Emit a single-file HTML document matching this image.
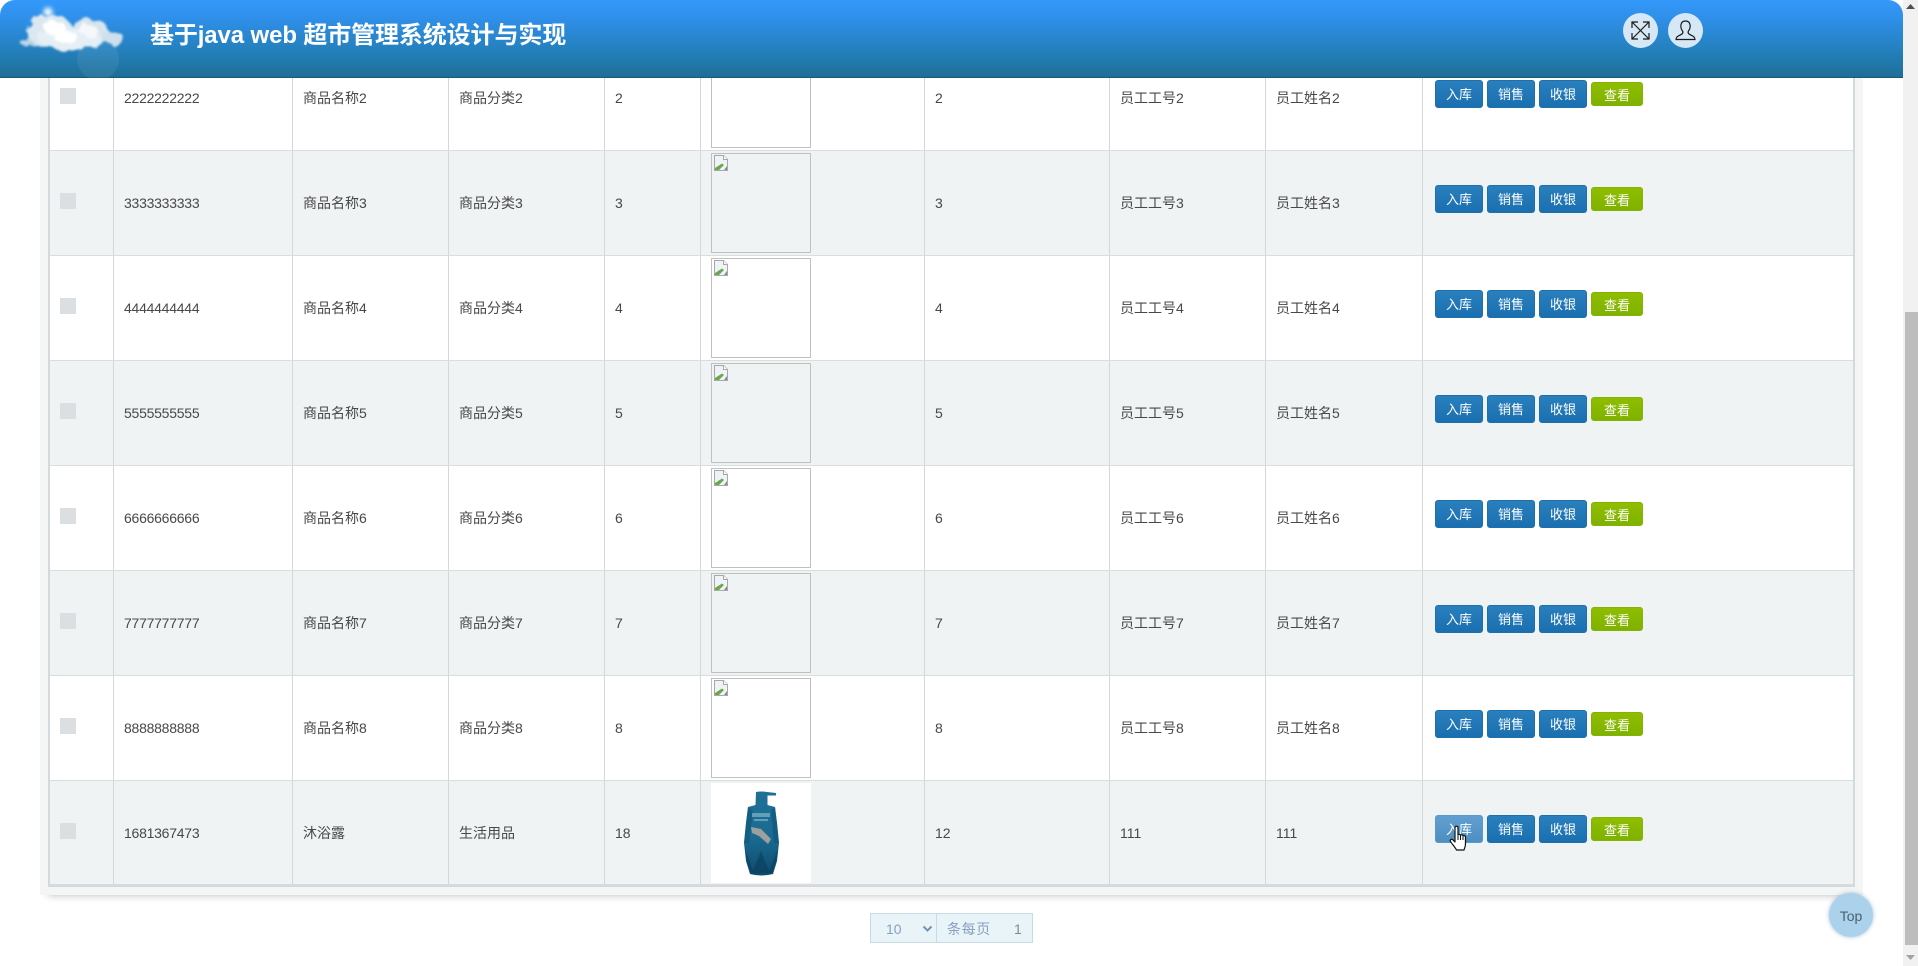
<!DOCTYPE html>
<html lang="zh"><head><meta charset="utf-8"><title>超市管理系统</title>
<style>
*{box-sizing:border-box}
html,body{margin:0;padding:0;width:1918px;height:966px;overflow:hidden;background:#fff;font-family:"Liberation Sans","Noto Sans CJK SC",sans-serif}
.panel{position:absolute;left:40px;top:-100px;width:1823px;height:995px;background:#f4f5f5;box-shadow:0 8px 8px -8px rgba(0,0,0,.28)}
.tbl{position:absolute;left:48px;top:46px;width:1807px;height:841px;border-left:2px solid #d3d9dc;border-right:2px solid #d3d9dc;border-bottom:2px solid #d3d9dc}
.r{display:flex;height:105px;background:#fff;border-bottom:1px solid #d8dddd;font-size:14px;line-height:104px;color:#484848}
.r:nth-child(even){background:#f0f3f3}
.r:last-child{height:104px}
.r>div{position:relative;flex:none;border-right:1px solid #d3d8d9;padding-left:10px;white-space:nowrap}
.r>div:nth-child(1){width:64px}
.r>div:nth-child(2){width:179px;letter-spacing:-.25px}
.r>div:nth-child(3){width:156px}
.r>div:nth-child(4){width:156px}
.r>div:nth-child(5){width:96px}
.r>div:nth-child(6){width:224px}
.r>div:nth-child(7){width:185px}
.r>div:nth-child(8){width:156px}
.r>div:nth-child(9){width:157px}
.r>div:nth-child(10){width:430px;border-right:0}
.cb{position:absolute;left:10px;top:42px;width:16px;height:16px;background:#dcdfe2}
.bi{position:absolute;left:10px;top:2px;width:100px;height:100px;border:1px solid #c0c0c0}
.bi svg{position:absolute;left:1px;top:1px}
.im{position:absolute;left:10px;top:2px;width:100px;height:100px;background:#fff}
.b{position:absolute;top:34px;width:48px;height:28px;border-radius:3px;background:linear-gradient(#2a7fbd,#1a6fb0);border:1px solid #1e70ad;color:#fff;font-size:13px;line-height:28px;text-align:center}
.b.a{left:12px}.b.s{left:64px}.b.c{left:116px}
.b.v{left:168px;top:36px;width:52px;height:24px;background:linear-gradient(#8fbd00,#7fb200);border-color:#85b400;line-height:25px}
.b.h{background:linear-gradient(#629fd0,#4d8fc1);border-color:#5a99c9}
.hd{position:absolute;left:0;top:0;width:1903px;height:78px;border-radius:15px 15px 0 0;background:linear-gradient(#3399fb 0,#2f8fe8 25%,#2480bd 65%,#1d6f96 100%);border-bottom:1px solid #175a78}
.tt{position:absolute;left:150px;top:19px;color:#fff;font-size:24px;line-height:34px;font-weight:bold;letter-spacing:-.12px;white-space:nowrap}
.ic{position:absolute;top:13px;width:35px;height:35px;border-radius:50%;background:#d6e8f5}
.pg{position:absolute;left:870px;top:913px;width:163px;height:30px;background:#e9f4f9;border:1px solid #c7dbe6;font-size:14px;line-height:30px;color:#85a2bd}
.pg span{position:absolute;top:0;white-space:nowrap}
.top{position:absolute;left:1829px;top:893px;width:44px;height:44px;border-radius:50%;background:#abd2ea;box-shadow:0 0 4px rgba(90,140,180,.55);color:#4b6172;font-size:14px;line-height:46px;text-align:center}
.sb{position:absolute;left:1903px;top:0;width:15px;height:966px;background:#f1f1f1}
.th{position:absolute;left:2px;top:312px;width:13px;height:633px;background:#bdbdbd}
svg{display:block}
</style></head><body>
<div class="panel"></div>
<div class="tbl">
<div class="r"><div><i class="cb"></i></div><div>2222222222</div><div>商品名称2</div><div>商品分类2</div><div>2</div><div><span class="bi"><svg width="16" height="16" viewBox="0 0 16 16"><path d="M1.500.5H10.500L14.500 4.500V15.500H1.500Z" fill="#eef3f8" stroke="#a8a8a8"/><path d="M2 15V13L9 8.500 11 10 6 15Z" fill="#6aa84a"/><path d="M11 15 14 11V15Z" fill="#8a8a8a"/><path d="M10.500.5V4.500H14.500" fill="#fff" stroke="#a8a8a8"/></svg></span></div><div>2</div><div>员工工号2</div><div>员工姓名2</div><div><span class="b a">入库</span><span class="b s">销售</span><span class="b c">收银</span><span class="b v">查看</span></div></div>
<div class="r"><div><i class="cb"></i></div><div>3333333333</div><div>商品名称3</div><div>商品分类3</div><div>3</div><div><span class="bi"><svg width="16" height="16" viewBox="0 0 16 16"><path d="M1.500.5H10.500L14.500 4.500V15.500H1.500Z" fill="#eef3f8" stroke="#a8a8a8"/><path d="M2 15V13L9 8.500 11 10 6 15Z" fill="#6aa84a"/><path d="M11 15 14 11V15Z" fill="#8a8a8a"/><path d="M10.500.5V4.500H14.500" fill="#fff" stroke="#a8a8a8"/></svg></span></div><div>3</div><div>员工工号3</div><div>员工姓名3</div><div><span class="b a">入库</span><span class="b s">销售</span><span class="b c">收银</span><span class="b v">查看</span></div></div>
<div class="r"><div><i class="cb"></i></div><div>4444444444</div><div>商品名称4</div><div>商品分类4</div><div>4</div><div><span class="bi"><svg width="16" height="16" viewBox="0 0 16 16"><path d="M1.500.5H10.500L14.500 4.500V15.500H1.500Z" fill="#eef3f8" stroke="#a8a8a8"/><path d="M2 15V13L9 8.500 11 10 6 15Z" fill="#6aa84a"/><path d="M11 15 14 11V15Z" fill="#8a8a8a"/><path d="M10.500.5V4.500H14.500" fill="#fff" stroke="#a8a8a8"/></svg></span></div><div>4</div><div>员工工号4</div><div>员工姓名4</div><div><span class="b a">入库</span><span class="b s">销售</span><span class="b c">收银</span><span class="b v">查看</span></div></div>
<div class="r"><div><i class="cb"></i></div><div>5555555555</div><div>商品名称5</div><div>商品分类5</div><div>5</div><div><span class="bi"><svg width="16" height="16" viewBox="0 0 16 16"><path d="M1.500.5H10.500L14.500 4.500V15.500H1.500Z" fill="#eef3f8" stroke="#a8a8a8"/><path d="M2 15V13L9 8.500 11 10 6 15Z" fill="#6aa84a"/><path d="M11 15 14 11V15Z" fill="#8a8a8a"/><path d="M10.500.5V4.500H14.500" fill="#fff" stroke="#a8a8a8"/></svg></span></div><div>5</div><div>员工工号5</div><div>员工姓名5</div><div><span class="b a">入库</span><span class="b s">销售</span><span class="b c">收银</span><span class="b v">查看</span></div></div>
<div class="r"><div><i class="cb"></i></div><div>6666666666</div><div>商品名称6</div><div>商品分类6</div><div>6</div><div><span class="bi"><svg width="16" height="16" viewBox="0 0 16 16"><path d="M1.500.5H10.500L14.500 4.500V15.500H1.500Z" fill="#eef3f8" stroke="#a8a8a8"/><path d="M2 15V13L9 8.500 11 10 6 15Z" fill="#6aa84a"/><path d="M11 15 14 11V15Z" fill="#8a8a8a"/><path d="M10.500.5V4.500H14.500" fill="#fff" stroke="#a8a8a8"/></svg></span></div><div>6</div><div>员工工号6</div><div>员工姓名6</div><div><span class="b a">入库</span><span class="b s">销售</span><span class="b c">收银</span><span class="b v">查看</span></div></div>
<div class="r"><div><i class="cb"></i></div><div>7777777777</div><div>商品名称7</div><div>商品分类7</div><div>7</div><div><span class="bi"><svg width="16" height="16" viewBox="0 0 16 16"><path d="M1.500.5H10.500L14.500 4.500V15.500H1.500Z" fill="#eef3f8" stroke="#a8a8a8"/><path d="M2 15V13L9 8.500 11 10 6 15Z" fill="#6aa84a"/><path d="M11 15 14 11V15Z" fill="#8a8a8a"/><path d="M10.500.5V4.500H14.500" fill="#fff" stroke="#a8a8a8"/></svg></span></div><div>7</div><div>员工工号7</div><div>员工姓名7</div><div><span class="b a">入库</span><span class="b s">销售</span><span class="b c">收银</span><span class="b v">查看</span></div></div>
<div class="r"><div><i class="cb"></i></div><div>8888888888</div><div>商品名称8</div><div>商品分类8</div><div>8</div><div><span class="bi"><svg width="16" height="16" viewBox="0 0 16 16"><path d="M1.500.5H10.500L14.500 4.500V15.500H1.500Z" fill="#eef3f8" stroke="#a8a8a8"/><path d="M2 15V13L9 8.500 11 10 6 15Z" fill="#6aa84a"/><path d="M11 15 14 11V15Z" fill="#8a8a8a"/><path d="M10.500.5V4.500H14.500" fill="#fff" stroke="#a8a8a8"/></svg></span></div><div>8</div><div>员工工号8</div><div>员工姓名8</div><div><span class="b a">入库</span><span class="b s">销售</span><span class="b c">收银</span><span class="b v">查看</span></div></div>
<div class="r"><div><i class="cb"></i></div><div>1681367473</div><div>沐浴露</div><div>生活用品</div><div>18</div><div><span class="im"><svg width="100" height="100" viewBox="0 0 100 100"><defs><linearGradient id="bt" x1="0" y1="0" x2="0" y2="1"><stop offset="0" stop-color="#1f7096"/><stop offset=".55" stop-color="#1a6a92"/><stop offset="1" stop-color="#0e4a6c"/></linearGradient></defs><path d="M45 9Q50 8 56 9L65 10V12.500L56.500 12.500V22L64 24 66 40 68 60 66 78 62 91Q50 94 39 91L35 78 33 60 35 40 37 24 44.500 22Z" fill="url(#bt)"/><path d="M37 24 42 28 38 60 33 60 35 40ZM64 24 60 28 63 60 68 60 66 40Z" fill="#0f5274" opacity=".55"/><path d="M34 66 42 88 50 68 58 88 67 66 65 80 61 90H40L36 80Z" fill="#0a3f5e" opacity=".65"/><path d="M41 30H59V34H41ZM43 36H57V38H43Z" fill="#7fb4c8" opacity=".7"/><path d="M40 44 50 46 60 56 57 61 48 53 41 50Z" fill="#b6a8a0" opacity=".85"/></svg></span></div><div>12</div><div>111</div><div>111</div><div><span class="b a h">入库</span><span class="b s">销售</span><span class="b c">收银</span><span class="b v">查看</span></div></div>
</div>

<div class="hd">
<svg style="position:absolute;left:0;top:0" width="150" height="78" viewBox="0 0 150 78"><defs><filter id="f1" x="-20%" y="-30%" width="140%" height="160%"><feTurbulence type="fractalNoise" baseFrequency=".09" numOctaves="3" seed="4" result="n"/><feDisplacementMap in="SourceGraphic" in2="n" scale="9"/><feGaussianBlur stdDeviation="1"/></filter><filter id="f2" x="-100%" y="-100%" width="300%" height="300%"><feGaussianBlur stdDeviation="2.500"/></filter></defs>
<circle cx="98" cy="59" r="21" fill="#fff" opacity=".07"/>
<g filter="url(#f1)"><ellipse cx="28" cy="42" rx="8" ry="4" fill="#bcd5e6"/><ellipse cx="50" cy="31" rx="23" ry="16" fill="#dbe8f1"/><ellipse cx="90" cy="33" rx="20" ry="14" fill="#d6e4ee"/><ellipse cx="113" cy="38" rx="11" ry="6" fill="#cfe0ec"/><ellipse cx="70" cy="39" rx="32" ry="11" fill="#e6eff5"/><ellipse cx="55" cy="28" rx="11" ry="7" fill="#fff"/><ellipse cx="88" cy="30" rx="9" ry="6" fill="#f4f8fb"/><ellipse cx="66" cy="37" rx="12" ry="6" fill="#fff"/></g>
<circle cx="48" cy="12" r="4.500" fill="#fff" filter="url(#f2)"/></svg>
<div class="tt">基于java web 超市管理系统设计与实现</div>
<div class="ic" style="left:1623px"><svg width="35" height="35" viewBox="0 0 35 35" fill="none" stroke="#1a1a1a" stroke-width="1.200"><path d="M9 9 26 26M26 9 9 26M9 15V9H15M20 9H26V15M26 20V26H20M15 26H9V20"/></svg></div>
<div class="ic" style="left:1668px"><svg width="35" height="35" viewBox="0 0 35 35" fill="none" stroke="#1a1a1a" stroke-width="1.200"><path d="M8 26.500H27C27 22.500 22 22.500 20.500 20.500 20 19.500 20 18.500 20.500 18 22 16 22.500 14 22 11.500 21.500 9 19.500 8 17.500 8 15.500 8 13.500 9 13 11.500 12.500 14 13 16 14.500 18 15 18.500 15 19.500 14.500 20.500 13 22.500 8 22.500 8 26.500Z"/></svg></div>
</div>

<div class="pg"><span style="left:15px">10</span><svg style="position:absolute;left:51px;top:11px" width="11" height="8" viewBox="0 0 11 8" fill="none" stroke="#6f93b3" stroke-width="2"><path d="M1.500 1.500 5.500 5.500 9.500 1.500"/></svg><span style="left:65px;top:0;height:28px;border-left:1px solid #c7dbe6"></span><span style="left:76px;letter-spacing:.6px">条每页</span><span style="left:143px;color:#7a8a98">1</span></div>
<div class="top">Top</div>

<svg style="position:absolute;left:1449px;top:825px" width="22" height="27" viewBox="0 0 22 27"><path d="M6 2.500C6 .8 9 .8 9 2.500V10C9 9 11.500 9 11.500 10.500 11.500 9.500 14 9.500 14 11 14 10 16.500 10.500 16.500 12V18.500C16.500 22 15.500 23 15 25H7.500C6 22 3 19 1.500 16.500.5 14.500 3 13.500 4 15L6 17Z" fill="#fff" stroke="#111" stroke-width="1.200" stroke-linejoin="round"/><path d="M9 10V15M11.500 10.500V15M14 11V15" stroke="#111"/></svg>

<div class="sb"><svg style="position:absolute;left:3px;top:4px" width="9" height="6"><path d="M4.500 0 9 5H0Z" fill="#505050"/></svg><div class="th"></div><svg style="position:absolute;left:3px;top:955px" width="9" height="6"><path d="M0 0H9L4.500 5Z" fill="#a3a3a3"/></svg></div>
</body></html>
